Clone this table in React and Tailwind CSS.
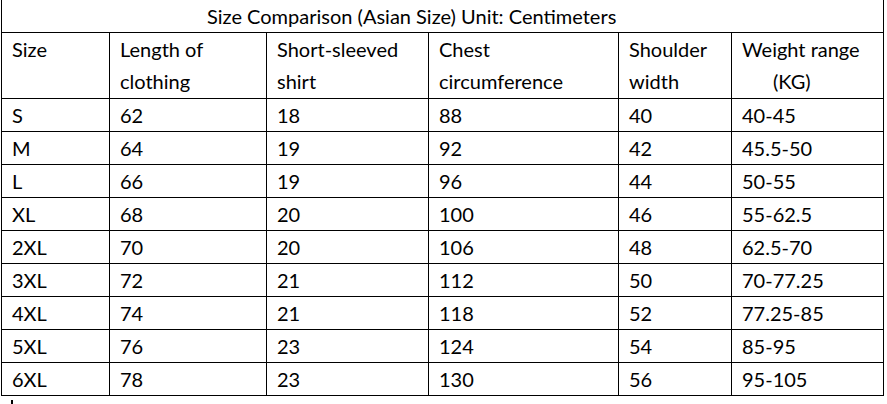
const rows = [
  ["S", "62", "18", "88", "40", "40-45"],
  ["M", "64", "19", "92", "42", "45.5-50"],
  ["L", "66", "19", "96", "44", "50-55"],
  ["XL", "68", "20", "100", "46", "55-62.5"],
  ["2XL", "70", "20", "106", "48", "62.5-70"],
  ["3XL", "72", "21", "112", "50", "70-77.25"],
  ["4XL", "74", "21", "118", "52", "77.25-85"],
  ["5XL", "76", "23", "124", "54", "85-95"],
  ["6XL", "78", "23", "130", "56", "95-105"],
];

const widths = ["w-[108px]", "w-[157px]", "w-[162px]", "w-[190px]", "w-[113px]", "w-[152px]"];

export default function App() {
  return (
    <div className="w-[887px] h-[404px] bg-white text-black font-['Lato','Carlito',sans-serif] text-[20px] relative">
      <table className="ml-px w-[882px] border-collapse table-fixed">
        <colgroup>
          {widths.map((w, i) => (
            <col key={i} className={w} />
          ))}
        </colgroup>
        <tbody>
          <tr className="h-[32px]">
            <td colSpan={6} className="border-x border-b border-black pl-[205px] p-0 align-middle leading-none">
              Size Comparison (Asian Size) Unit: Centimeters
            </td>
          </tr>
          <tr className="h-[66px]">
            <td className="border border-black pl-[10px] p-0 align-top leading-[32px]">Size</td>
            <td className="border border-black pl-[10px] p-0 align-top leading-[32px]">
              Length of
              <br />
              clothing
            </td>
            <td className="border border-black pl-[10px] p-0 align-top leading-[32px]">
              Short-sleeved
              <br />
              shirt
            </td>
            <td className="border border-black pl-[10px] p-0 align-top leading-[32px]">
              Chest
              <br />
              circumference
            </td>
            <td className="border border-black pl-[10px] p-0 align-top leading-[32px]">
              Shoulder
              <br />
              width
            </td>
            <td className="border border-black pl-[10px] p-0 align-top leading-[32px]">
              Weight range
              <br />
              <span className="pl-[31px]">(KG)</span>
            </td>
          </tr>
          {rows.map((r) => (
            <tr key={r[0]} className="h-[33px]">
              {r.map((c, i) => (
                <td key={i} className="border border-black pl-[10px] p-0 align-middle leading-none">
                  {c}
                </td>
              ))}
            </tr>
          ))}
        </tbody>
      </table>
      <span className="absolute left-[11px] top-[400px] w-[2px] h-[4px] bg-black"></span>
    </div>
  );
}
